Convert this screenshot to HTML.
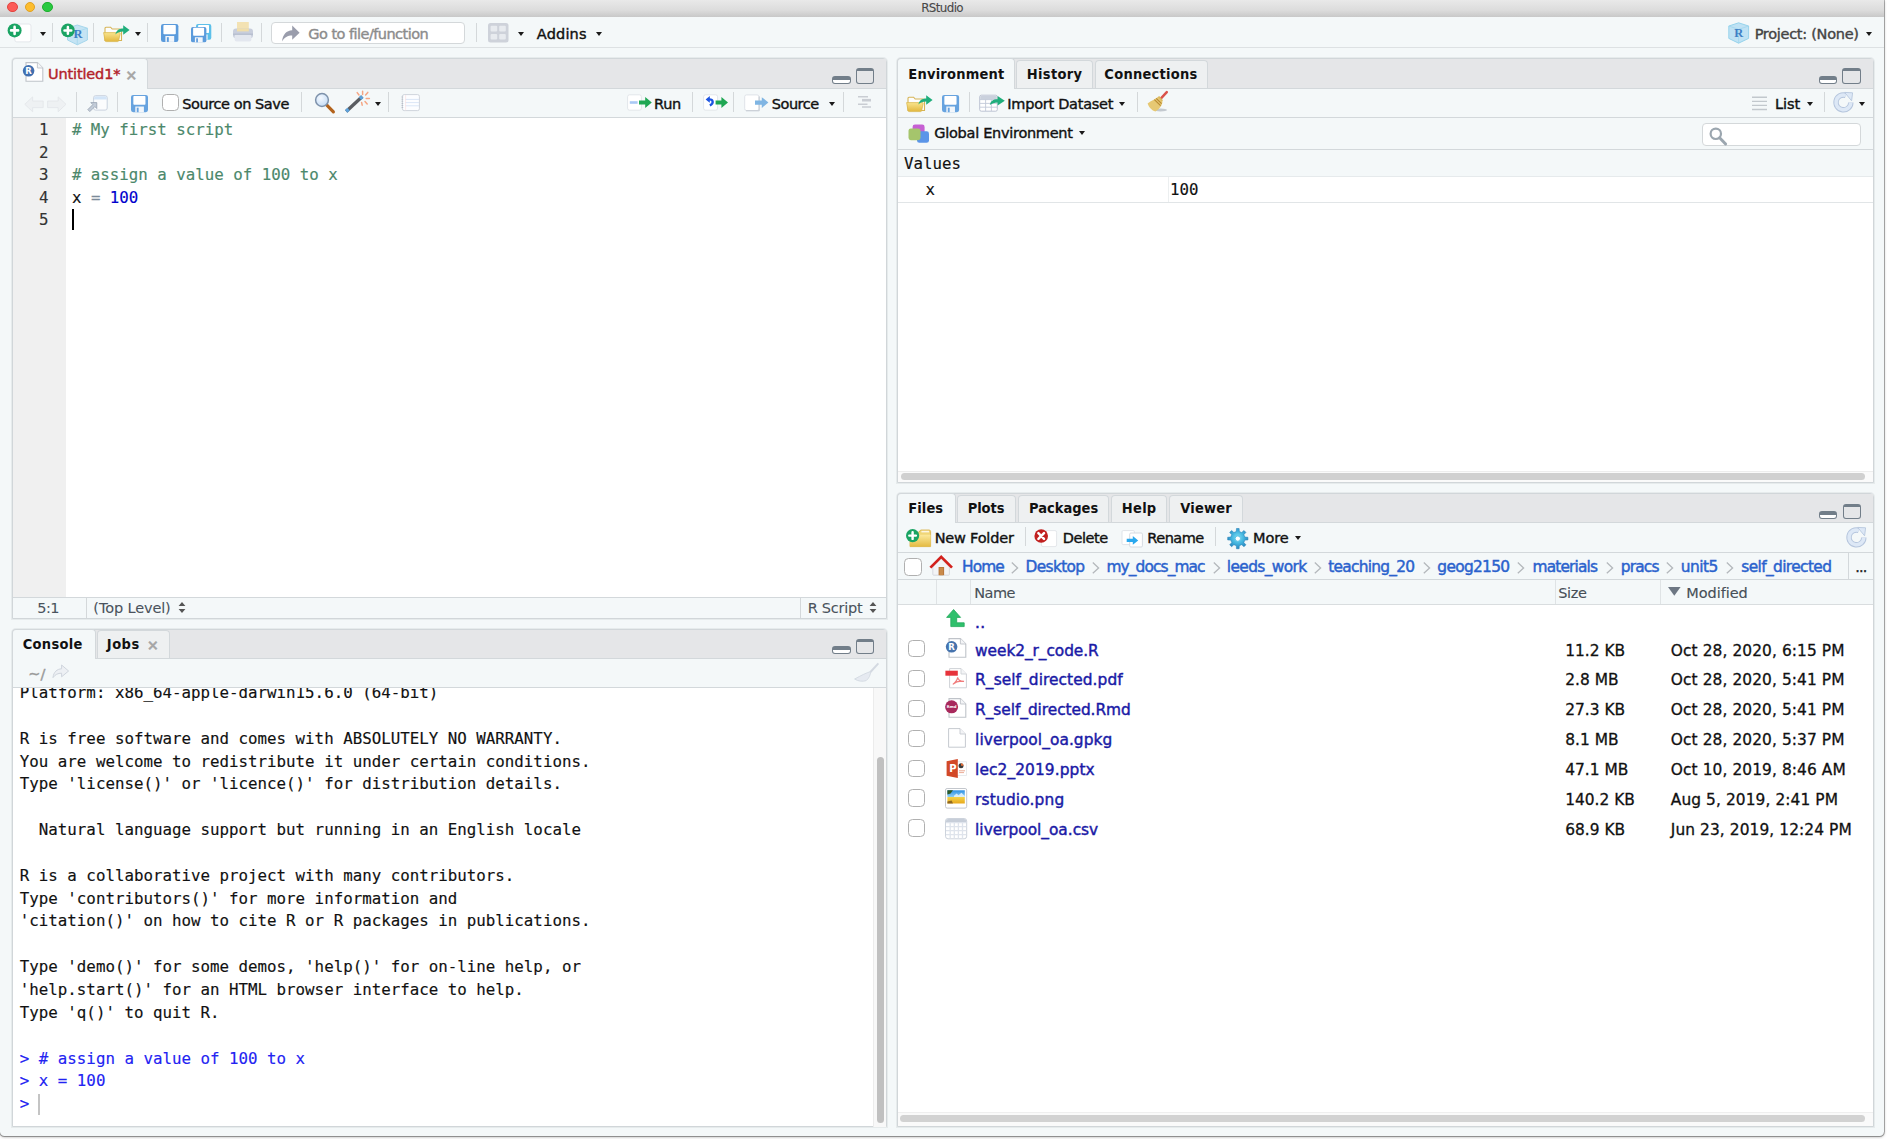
<!DOCTYPE html>
<html lang="en"><head><meta charset="utf-8"><title>RStudio</title>
<style>
html,body{margin:0;padding:0;background:#fff;width:1887px;height:1139px;overflow:hidden}
#win{position:absolute;left:0;top:0;width:1884px;height:1135.5px;background:#f4f8f9;overflow:hidden;border-radius:0 0 4.5px 4.5px;box-shadow:0 0 0 1px rgba(0,0,0,.28),0 1px 3px rgba(0,0,0,.35)}
#win div,#win svg{position:absolute;box-sizing:border-box}
#win svg{overflow:visible}
.t{-webkit-text-stroke:.4px currentColor;font-family:"DejaVu Sans","Liberation Sans",sans-serif;color:#111;white-space:nowrap;letter-spacing:-.42px}
.tb{font-family:"DejaVu Sans Condensed","DejaVu Sans","Liberation Sans",sans-serif;font-weight:bold;color:#111;white-space:nowrap;letter-spacing:-.05px}
.m{-webkit-text-stroke:.15px currentColor;font-family:"DejaVu Sans Mono","Liberation Mono",monospace;color:#111;white-space:pre}
.f{-webkit-text-stroke:.3px currentColor;font-family:"DejaVu Sans","Liberation Sans",sans-serif;color:#111;white-space:nowrap}
.dd{width:0;height:0;border-left:3.5px solid transparent;border-right:3.5px solid transparent;border-top:4.5px solid #1a1a1a}
.pane{background:#fff;border:1px solid #d1d6d9;box-shadow:0 0 0 1px rgba(209,214,217,.4);border-radius:4px 4px 0 0;overflow:hidden}
.tabbar{background:#e5e6e8;border-bottom:1px solid #d3d8db}
.bar{background:#f4f8f9;border-bottom:1px solid #d3d8db}
.tab{background:#eef0f1;border:1px solid #d3d8db;border-bottom:none;border-radius:4px 4px 0 0}
.tab.on{background:#f4f8f9}
.cb{background:#fff;border:1.9px solid #b0b0b0;border-radius:4.5px}

</style></head>
<body>
<div id="win">
<div style="left:0px;top:0px;width:1884px;height:16.5px;background:linear-gradient(#e9e9e9 0%,#dcdcdc 60%,#c8c8c8 100%)"></div>
<div style="left:7.1px;top:1.6px;width:10.8px;height:10.8px;background:#fc5b57;border:0.6px solid #e2453f;border-radius:50%"></div>
<div style="left:24.6px;top:1.6px;width:10.8px;height:10.8px;background:#fdbd2e;border:0.6px solid #e0a123;border-radius:50%"></div>
<div style="left:42.300000000000004px;top:1.6px;width:10.8px;height:10.8px;background:#29c940;border:0.6px solid #1fae2f;border-radius:50%"></div>
<div class="t" style="left:921.16px;top:-1.72px;font-size:11.9px;line-height:20px;letter-spacing:-0.610px;color:#484848;-webkit-text-stroke:.1px #484848">RStudio</div>
<div style="left:0px;top:16.5px;width:1884px;height:31.5px;background:#f4f8f9;border-bottom:1px solid #dde1e3"></div>
<div style="left:52.0px;top:23px;width:1px;height:19px;background:#d4d8da"></div>
<div style="left:93.2px;top:23px;width:1px;height:19px;background:#d4d8da"></div>
<div style="left:146.5px;top:23px;width:1px;height:19px;background:#d4d8da"></div>
<div style="left:220.5px;top:23px;width:1px;height:19px;background:#d4d8da"></div>
<div style="left:261.2px;top:23px;width:1px;height:19px;background:#d4d8da"></div>
<div style="left:475.5px;top:23px;width:1px;height:19px;background:#d4d8da"></div>
<div class="dd" style="left:40.2px;top:32.3px"></div>
<div class="dd" style="left:134.5px;top:32.3px"></div>
<div class="dd" style="left:518.2px;top:32.3px"></div>
<div class="dd" style="left:595.5px;top:32.3px"></div>
<div class="dd" style="left:1866.2px;top:32.3px"></div>
<div style="left:271px;top:21.5px;width:193.5px;height:22.5px;background:#fff;border:1px solid #d4d8da;border-radius:4px"></div>
<div class="t" style="left:308.35px;top:24.28px;font-size:14.5px;line-height:20px;letter-spacing:-0.542px;color:#8c8c8c">Go to file/function</div>
<div class="t" style="left:536.85px;top:24.28px;font-size:14.5px;line-height:20px;letter-spacing:0.158px;">Addins</div>
<div class="t" style="left:1754.65px;top:24.28px;font-size:14.5px;line-height:20px;letter-spacing:-0.283px;color:#444">Project: (None)</div>
<div class="pane" style="left:12px;top:58px;width:875px;height:561px;"></div>
<div class="tabbar" style="left:13px;top:59px;width:873px;height:30px;"></div>
<div class="tab on" style="left:12px;top:58px;width:136px;height:31px;"></div>
<div style="left:832px;top:75.89999999999999px;width:18.6px;height:8px;background:#fff;border:1.7px solid #727e89;border-top:4px solid #727e89;border-radius:3px"></div>
<div style="left:855.6px;top:68.3px;width:18.6px;height:15.6px;background:transparent;border:1.7px solid #727e89;border-top:3.8px solid #727e89;border-radius:3px"></div>
<div class="t" style="left:48.05px;top:63.88px;font-size:14.5px;line-height:20px;letter-spacing:-0.154px;color:#b3222a">Untitled1*</div>
<div class="f" style="left:125.35px;top:64.98px;font-size:14.5px;line-height:20px;letter-spacing:-1.200px;color:#a6a6a6;font-weight:bold">×</div>
<div class="bar" style="left:13px;top:89px;width:873px;height:29px;"></div>
<div style="left:75.5px;top:92px;width:1px;height:19.5px;background:#d4d8da"></div>
<div style="left:116.5px;top:92px;width:1px;height:19.5px;background:#d4d8da"></div>
<div style="left:301.2px;top:92px;width:1px;height:19.5px;background:#d4d8da"></div>
<div style="left:387.5px;top:92px;width:1px;height:19.5px;background:#d4d8da"></div>
<div style="left:692.0px;top:92px;width:1px;height:19.5px;background:#d4d8da"></div>
<div style="left:733.3px;top:92px;width:1px;height:19.5px;background:#d4d8da"></div>
<div style="left:842.5px;top:92px;width:1px;height:19.5px;background:#d4d8da"></div>
<div class="cb" style="left:161.7px;top:94px;width:17.3px;height:17.3px;"></div>
<div class="t" style="left:182.35px;top:93.88px;font-size:14.5px;line-height:20px;letter-spacing:-0.434px;">Source on Save</div>
<div class="dd" style="left:375.2px;top:101.5px"></div>
<div class="dd" style="left:829.3px;top:101.5px"></div>
<div class="t" style="left:654.05px;top:93.88px;font-size:14.5px;line-height:20px;letter-spacing:-0.303px;">Run</div>
<div class="t" style="left:771.85px;top:93.88px;font-size:14.5px;line-height:20px;letter-spacing:-0.501px;">Source</div>
<div style="left:13px;top:118px;width:53px;height:479px;background:#f0f0f0"></div>
<div class="m" style="left:0px;top:119.45px;font-size:15.75px;line-height:22px;width:48.6px;text-align:right;color:#333;">1</div>
<div class="m" style="left:71.9px;top:119.45px;font-size:15.78px;line-height:22px"><span style="color:#4c886b"># My first script</span></div>
<div class="m" style="left:0px;top:141.85px;font-size:15.75px;line-height:22px;width:48.6px;text-align:right;color:#333;">2</div>
<div class="m" style="left:0px;top:164.25px;font-size:15.75px;line-height:22px;width:48.6px;text-align:right;color:#333;">3</div>
<div class="m" style="left:71.9px;top:164.25px;font-size:15.78px;line-height:22px"><span style="color:#4c886b"># assign a value of 100 to x</span></div>
<div class="m" style="left:0px;top:186.65px;font-size:15.75px;line-height:22px;width:48.6px;text-align:right;color:#333;">4</div>
<div class="m" style="left:71.9px;top:186.65px;font-size:15.78px;line-height:22px"><span style="color:#111">x </span><span style="color:#7c8a99">= </span><span style="color:#0000cd">100</span></div>
<div class="m" style="left:0px;top:209.05px;font-size:15.75px;line-height:22px;width:48.6px;text-align:right;color:#333;">5</div>
<div style="left:71.6px;top:208.6px;width:2.4px;height:21.2px;background:#000"></div>
<div style="left:13px;top:597px;width:873px;height:21px;background:#f4f8f9;border-top:1px solid #d3d8db"></div>
<div style="left:86.2px;top:598px;width:1px;height:20px;background:#d4d8da"></div>
<div style="left:800.2px;top:598px;width:1px;height:20px;background:#d4d8da"></div>
<div class="t" style="left:37.35px;top:598.18px;font-size:14.5px;line-height:20px;letter-spacing:-0.580px;color:#4a535d;-webkit-text-stroke:.08px #4a535d">5:1</div>
<div class="t" style="left:93.35px;top:598.18px;font-size:14.5px;line-height:20px;letter-spacing:-0.124px;color:#4a535d;-webkit-text-stroke:.08px #4a535d">(Top Level)</div>
<div class="t" style="left:807.65px;top:598.18px;font-size:14.5px;line-height:20px;letter-spacing:-0.256px;color:#4a535d;-webkit-text-stroke:.08px #4a535d">R Script</div>
<svg style="left:177.5px;top:601.0px" width="8" height="13" viewBox="0 0 8 13"><path d="M0.6 5 L4 1 L7.4 5Z M0.6 8 L4 12 L7.4 8Z" fill="#555"/></svg>
<svg style="left:869px;top:601.0px" width="8" height="13" viewBox="0 0 8 13"><path d="M0.6 5 L4 1 L7.4 5Z M0.6 8 L4 12 L7.4 8Z" fill="#555"/></svg>
<div class="pane" style="left:12px;top:628.5px;width:875px;height:498.5px;"></div>
<div class="tabbar" style="left:13px;top:629.5px;width:873px;height:29.5px;"></div>
<div class="tab on" style="left:12px;top:628.5px;width:83.5px;height:30.5px;"></div>
<div class="tab" style="left:96.5px;top:630px;width:73.5px;height:28px;"></div>
<div style="left:832px;top:646.1px;width:18.6px;height:8px;background:#fff;border:1.7px solid #727e89;border-top:4px solid #727e89;border-radius:3px"></div>
<div style="left:855.6px;top:638.5px;width:18.6px;height:15.6px;background:transparent;border:1.7px solid #727e89;border-top:3.8px solid #727e89;border-radius:3px"></div>
<div class="tb" style="left:22.65px;top:633.88px;font-size:14.5px;line-height:20px;letter-spacing:0.304px;">Console</div>
<div class="tb" style="left:106.85px;top:633.88px;font-size:14.5px;line-height:20px;letter-spacing:0.471px;">Jobs</div>
<div class="f" style="left:146.85px;top:635.18px;font-size:14.5px;line-height:20px;letter-spacing:-1.200px;color:#a6a6a6;font-weight:bold">×</div>
<div class="bar" style="left:13px;top:659px;width:873px;height:29px;"></div>
<div class="t" style="left:28.35px;top:664.38px;font-size:14.5px;line-height:20px;letter-spacing:0.129px;color:#9a9a9a">~/</div>
<div style="left:13px;top:688px;width:873px;height:438px;overflow:hidden;background:#fff"><div class="m" style="left:6.8px;top:-6.05px;font-size:15.8px;line-height:22px;">Platform: x86_64-apple-darwin15.6.0 (64-bit)</div><div class="m" style="left:6.8px;top:39.65px;font-size:15.8px;line-height:22px;">R is free software and comes with ABSOLUTELY NO WARRANTY.</div><div class="m" style="left:6.8px;top:62.50px;font-size:15.8px;line-height:22px;">You are welcome to redistribute it under certain conditions.</div><div class="m" style="left:6.8px;top:85.35px;font-size:15.8px;line-height:22px;">Type &#x27;license()&#x27; or &#x27;licence()&#x27; for distribution details.</div><div class="m" style="left:6.8px;top:131.05px;font-size:15.8px;line-height:22px;">  Natural language support but running in an English locale</div><div class="m" style="left:6.8px;top:176.75px;font-size:15.8px;line-height:22px;">R is a collaborative project with many contributors.</div><div class="m" style="left:6.8px;top:199.60px;font-size:15.8px;line-height:22px;">Type &#x27;contributors()&#x27; for more information and</div><div class="m" style="left:6.8px;top:222.45px;font-size:15.8px;line-height:22px;">&#x27;citation()&#x27; on how to cite R or R packages in publications.</div><div class="m" style="left:6.8px;top:268.15px;font-size:15.8px;line-height:22px;">Type &#x27;demo()&#x27; for some demos, &#x27;help()&#x27; for on-line help, or</div><div class="m" style="left:6.8px;top:291.00px;font-size:15.8px;line-height:22px;">&#x27;help.start()&#x27; for an HTML browser interface to help.</div><div class="m" style="left:6.8px;top:313.85px;font-size:15.8px;line-height:22px;">Type &#x27;q()&#x27; to quit R.</div><div class="m" style="left:6.8px;top:359.55px;font-size:15.8px;line-height:22px;color:#2323f2;">&gt; # assign a value of 100 to x</div><div class="m" style="left:6.8px;top:382.40px;font-size:15.8px;line-height:22px;color:#2323f2;">&gt; x = 100</div><div class="m" style="left:6.8px;top:405.25px;font-size:15.8px;line-height:22px;color:#2323f2;">&gt; </div><div style="left:25.4px;top:405.5px;width:1.6px;height:21px;background:#c4c4c4"></div></div>
<div style="left:873px;top:688px;width:13px;height:438.5px;background:#f8f8f8;border-left:1px solid #ececec"></div>
<div style="left:876.8px;top:756.8px;width:7px;height:366px;background:#c0c0c0;border-radius:3.5px"></div>
<div class="pane" style="left:897px;top:58px;width:977px;height:425px;"></div>
<div class="tabbar" style="left:898px;top:59px;width:975px;height:30px;"></div>
<div class="tab on" style="left:897px;top:58px;width:117.5px;height:31px;"></div>
<div class="tab" style="left:1016px;top:59.5px;width:77px;height:28.5px;"></div>
<div class="tab" style="left:1094.7px;top:59.5px;width:113.79999999999995px;height:28.5px;"></div>
<div style="left:1818.7px;top:75.89999999999999px;width:18.6px;height:8px;background:#fff;border:1.7px solid #727e89;border-top:4px solid #727e89;border-radius:3px"></div>
<div style="left:1842.3px;top:68.3px;width:18.6px;height:15.6px;background:transparent;border:1.7px solid #727e89;border-top:3.8px solid #727e89;border-radius:3px"></div>
<div class="tb" style="left:908.35px;top:63.88px;font-size:14.5px;line-height:20px;letter-spacing:0.206px;">Environment</div>
<div class="tb" style="left:1026.85px;top:63.88px;font-size:14.5px;line-height:20px;letter-spacing:0.315px;">History</div>
<div class="tb" style="left:1104.35px;top:63.88px;font-size:14.5px;line-height:20px;letter-spacing:0.262px;">Connections</div>
<div class="bar" style="left:898px;top:89px;width:975px;height:29px;"></div>
<div style="left:969.2px;top:92px;width:1px;height:19.5px;background:#d4d8da"></div>
<div style="left:1136.5px;top:92px;width:1px;height:19.5px;background:#d4d8da"></div>
<div style="left:1824.0px;top:92px;width:1px;height:19.5px;background:#d4d8da"></div>
<div class="t" style="left:1007.35px;top:93.88px;font-size:14.5px;line-height:20px;letter-spacing:-0.265px;">Import Dataset</div>
<div class="dd" style="left:1119.3px;top:101.5px"></div>
<div class="dd" style="left:1806.5px;top:101.5px"></div>
<div class="dd" style="left:1859.3px;top:101.5px"></div>
<div class="t" style="left:1775.05px;top:93.88px;font-size:14.5px;line-height:20px;letter-spacing:-0.064px;">List</div>
<div class="bar" style="left:898px;top:118px;width:975px;height:31.5px;"></div>
<div class="t" style="left:934.35px;top:123.08px;font-size:14.5px;line-height:20px;letter-spacing:-0.286px;">Global Environment</div>
<div class="dd" style="left:1079.0px;top:131px"></div>
<div style="left:1701.5px;top:123.3px;width:159.5px;height:23px;background:#fff;border:1px solid #d4d8da;border-radius:4px"></div>
<div style="left:898px;top:149.5px;width:975px;height:27.5px;background:#f4f8f9;border-bottom:1px solid #e6eaec"></div>
<div class="m" style="left:904px;top:152.55px;font-size:15.75px;line-height:22px;">Values</div>
<div style="left:898px;top:177px;width:975px;height:26px;background:#fff;border-bottom:1px solid #e1e5e7"></div>
<div style="left:1168px;top:177px;width:1px;height:25px;background:#eceff0"></div>
<div class="m" style="left:925.6px;top:178.55px;font-size:15.75px;line-height:22px;">x</div>
<div class="m" style="left:1170px;top:178.55px;font-size:15.75px;line-height:22px;">100</div>
<div style="left:898px;top:470.5px;width:975px;height:11.5px;background:#fafafa;border-top:1px solid #ededed"></div>
<div style="left:900.8px;top:472.7px;width:964.7px;height:7.5px;background:#d0d0d0;border-radius:4px"></div>
<div class="pane" style="left:897px;top:493px;width:977px;height:634px;"></div>
<div class="tabbar" style="left:898px;top:494px;width:975px;height:29px;"></div>
<div class="tab on" style="left:897px;top:493px;width:58.5px;height:30px;"></div>
<div class="tab" style="left:957px;top:494.5px;width:59.299999999999955px;height:27.5px;"></div>
<div class="tab" style="left:1018px;top:494.5px;width:91.29999999999995px;height:27.5px;"></div>
<div class="tab" style="left:1111px;top:494.5px;width:56.299999999999955px;height:27.5px;"></div>
<div class="tab" style="left:1169px;top:494.5px;width:73.70000000000005px;height:27.5px;"></div>
<div style="left:1818.9px;top:511.1px;width:18.6px;height:8px;background:#fff;border:1.7px solid #727e89;border-top:4px solid #727e89;border-radius:3px"></div>
<div style="left:1842.5px;top:503.5px;width:18.6px;height:15.6px;background:transparent;border:1.7px solid #727e89;border-top:3.8px solid #727e89;border-radius:3px"></div>
<div class="tb" style="left:908.35px;top:497.58px;font-size:14.5px;line-height:20px;letter-spacing:0.067px;">Files</div>
<div class="tb" style="left:967.65px;top:497.58px;font-size:14.5px;line-height:20px;letter-spacing:-0.039px;">Plots</div>
<div class="tb" style="left:1029.05px;top:497.58px;font-size:14.5px;line-height:20px;letter-spacing:-0.004px;">Packages</div>
<div class="tb" style="left:1121.85px;top:497.58px;font-size:14.5px;line-height:20px;letter-spacing:0.257px;">Help</div>
<div class="tb" style="left:1180.15px;top:497.58px;font-size:14.5px;line-height:20px;letter-spacing:0.217px;">Viewer</div>
<div class="bar" style="left:898px;top:523px;width:975px;height:30px;"></div>
<div style="left:1024.5px;top:526.5px;width:1px;height:19.5px;background:#d4d8da"></div>
<div style="left:1214.8px;top:526.5px;width:1px;height:19.5px;background:#d4d8da"></div>
<div class="t" style="left:934.65px;top:528.38px;font-size:14.5px;line-height:20px;letter-spacing:-0.204px;">New Folder</div>
<div class="t" style="left:1062.65px;top:528.38px;font-size:14.5px;line-height:20px;letter-spacing:-0.409px;">Delete</div>
<div class="t" style="left:1147.35px;top:528.38px;font-size:14.5px;line-height:20px;letter-spacing:-0.527px;">Rename</div>
<div class="t" style="left:1253.05px;top:528.38px;font-size:14.5px;line-height:20px;letter-spacing:-0.087px;">More</div>
<div class="dd" style="left:1295.3px;top:536.3px"></div>
<div class="bar" style="left:898px;top:553px;width:975px;height:26.7px;"></div>
<div class="cb" style="left:904.2px;top:558.3px;width:17.4px;height:17.3px;"></div>
<div class="f" style="left:962.11px;top:557.17px;font-size:15.4px;line-height:20px;letter-spacing:-0.967px;color:#2a62cd;-webkit-text-stroke:.45px #2a62cd">Home</div>
<div class="f" style="left:1025.61px;top:557.17px;font-size:15.4px;line-height:20px;letter-spacing:-0.657px;color:#2a62cd;-webkit-text-stroke:.45px #2a62cd">Desktop</div>
<div class="f" style="left:1106.51px;top:557.17px;font-size:15.4px;line-height:20px;letter-spacing:-0.896px;color:#2a62cd;-webkit-text-stroke:.45px #2a62cd">my_docs_mac</div>
<div class="f" style="left:1226.81px;top:557.17px;font-size:15.4px;line-height:20px;letter-spacing:-0.627px;color:#2a62cd;-webkit-text-stroke:.45px #2a62cd">leeds_work</div>
<div class="f" style="left:1328.31px;top:557.17px;font-size:15.4px;line-height:20px;letter-spacing:-0.741px;color:#2a62cd;-webkit-text-stroke:.45px #2a62cd">teaching_20</div>
<div class="f" style="left:1437.31px;top:557.17px;font-size:15.4px;line-height:20px;letter-spacing:-0.688px;color:#2a62cd;-webkit-text-stroke:.45px #2a62cd">geog2150</div>
<div class="f" style="left:1532.51px;top:557.17px;font-size:15.4px;line-height:20px;letter-spacing:-0.853px;color:#2a62cd;-webkit-text-stroke:.45px #2a62cd">materials</div>
<div class="f" style="left:1620.71px;top:557.17px;font-size:15.4px;line-height:20px;letter-spacing:-0.806px;color:#2a62cd;-webkit-text-stroke:.45px #2a62cd">pracs</div>
<div class="f" style="left:1680.81px;top:557.17px;font-size:15.4px;line-height:20px;letter-spacing:-0.548px;color:#2a62cd;-webkit-text-stroke:.45px #2a62cd">unit5</div>
<div class="f" style="left:1741.31px;top:557.17px;font-size:15.4px;line-height:20px;letter-spacing:-0.626px;color:#2a62cd;-webkit-text-stroke:.45px #2a62cd">self_directed</div>
<svg style="left:1010.8px;top:561.7px" width="8" height="12" viewBox="0 0 8 12"><path d="M0.8 0.6 L6.6 5.9 L0.8 11.2" fill="none" stroke="#b4b8bc" stroke-width="1.3"/></svg>
<svg style="left:1092px;top:561.7px" width="8" height="12" viewBox="0 0 8 12"><path d="M0.8 0.6 L6.6 5.9 L0.8 11.2" fill="none" stroke="#b4b8bc" stroke-width="1.3"/></svg>
<svg style="left:1212.5px;top:561.7px" width="8" height="12" viewBox="0 0 8 12"><path d="M0.8 0.6 L6.6 5.9 L0.8 11.2" fill="none" stroke="#b4b8bc" stroke-width="1.3"/></svg>
<svg style="left:1313.8px;top:561.7px" width="8" height="12" viewBox="0 0 8 12"><path d="M0.8 0.6 L6.6 5.9 L0.8 11.2" fill="none" stroke="#b4b8bc" stroke-width="1.3"/></svg>
<svg style="left:1422.5px;top:561.7px" width="8" height="12" viewBox="0 0 8 12"><path d="M0.8 0.6 L6.6 5.9 L0.8 11.2" fill="none" stroke="#b4b8bc" stroke-width="1.3"/></svg>
<svg style="left:1517.4px;top:561.7px" width="8" height="12" viewBox="0 0 8 12"><path d="M0.8 0.6 L6.6 5.9 L0.8 11.2" fill="none" stroke="#b4b8bc" stroke-width="1.3"/></svg>
<svg style="left:1605.6px;top:561.7px" width="8" height="12" viewBox="0 0 8 12"><path d="M0.8 0.6 L6.6 5.9 L0.8 11.2" fill="none" stroke="#b4b8bc" stroke-width="1.3"/></svg>
<svg style="left:1666px;top:561.7px" width="8" height="12" viewBox="0 0 8 12"><path d="M0.8 0.6 L6.6 5.9 L0.8 11.2" fill="none" stroke="#b4b8bc" stroke-width="1.3"/></svg>
<svg style="left:1725.6px;top:561.7px" width="8" height="12" viewBox="0 0 8 12"><path d="M0.8 0.6 L6.6 5.9 L0.8 11.2" fill="none" stroke="#b4b8bc" stroke-width="1.3"/></svg>
<div style="left:1847.5px;top:553px;width:1px;height:26px;background:#d3d8db"></div>
<div class="f" style="left:1855.15px;top:557.28px;font-size:14.5px;line-height:20px;letter-spacing:-0.774px;color:#222">...</div>
<div style="left:898px;top:579.7px;width:975px;height:25px;background:#f4f8f9;border-bottom:1px solid #d9dddf"></div>
<div style="left:935.8px;top:580px;width:1.2px;height:24px;background:#dfe3e5"></div>
<div style="left:970.3px;top:580px;width:1.2px;height:24px;background:#dfe3e5"></div>
<div style="left:1554.5px;top:580px;width:1.2px;height:24px;background:#dfe3e5"></div>
<div style="left:1660.1px;top:580px;width:1.2px;height:24px;background:#dfe3e5"></div>
<div class="t" style="left:974.35px;top:582.78px;font-size:14.5px;line-height:20px;letter-spacing:-0.569px;color:#474f57;-webkit-text-stroke:.12px #474f57">Name</div>
<div class="t" style="left:1558.25px;top:582.78px;font-size:14.5px;line-height:20px;letter-spacing:-0.340px;color:#474f57;-webkit-text-stroke:.12px #474f57">Size</div>
<div class="t" style="left:1686.35px;top:582.78px;font-size:14.5px;line-height:20px;letter-spacing:-0.071px;color:#474f57;-webkit-text-stroke:.12px #474f57">Modified</div>
<svg style="left:1668px;top:586.7px" width="13" height="9" viewBox="0 0 13 9"><path d="M0 0H12.6L6.3 8.8Z" fill="#6d7783"/></svg>
<div class="f" style="left:975.11px;top:612.87px;font-size:15.4px;line-height:20px;letter-spacing:0.245px;color:#1a1aa6;-webkit-text-stroke:.5px #1a1aa6">..</div>
<div class="cb" style="left:908.4px;top:639.9px;width:17px;height:17.3px;"></div>
<div class="f" style="left:975.11px;top:640.57px;font-size:15.4px;line-height:20px;letter-spacing:-0.076px;color:#1a1aa6;-webkit-text-stroke:.42px #1a1aa6">week2_r_code.R</div>
<div class="f" style="left:1565.2px;top:640.57px;font-size:15.4px;line-height:20px;letter-spacing:.02px">11.2 KB</div>
<div class="f" style="left:1670.8px;top:640.57px;font-size:15.4px;line-height:20px;letter-spacing:.09px">Oct 28, 2020, 6:15 PM</div>
<div class="cb" style="left:908.4px;top:669.8px;width:17px;height:17.3px;"></div>
<div class="f" style="left:975.11px;top:670.47px;font-size:15.4px;line-height:20px;letter-spacing:0.065px;color:#1a1aa6;-webkit-text-stroke:.42px #1a1aa6">R_self_directed.pdf</div>
<div class="f" style="left:1565.2px;top:670.47px;font-size:15.4px;line-height:20px;letter-spacing:.02px">2.8 MB</div>
<div class="f" style="left:1670.8px;top:670.47px;font-size:15.4px;line-height:20px;letter-spacing:.09px">Oct 28, 2020, 5:41 PM</div>
<div class="cb" style="left:908.4px;top:699.6999999999999px;width:17px;height:17.3px;"></div>
<div class="f" style="left:975.11px;top:700.37px;font-size:15.4px;line-height:20px;letter-spacing:-0.067px;color:#1a1aa6;-webkit-text-stroke:.42px #1a1aa6">R_self_directed.Rmd</div>
<div class="f" style="left:1565.2px;top:700.37px;font-size:15.4px;line-height:20px;letter-spacing:.02px">27.3 KB</div>
<div class="f" style="left:1670.8px;top:700.37px;font-size:15.4px;line-height:20px;letter-spacing:.09px">Oct 28, 2020, 5:41 PM</div>
<div class="cb" style="left:908.4px;top:729.6px;width:17px;height:17.3px;"></div>
<div class="f" style="left:975.11px;top:730.27px;font-size:15.4px;line-height:20px;letter-spacing:0.076px;color:#1a1aa6;-webkit-text-stroke:.42px #1a1aa6">liverpool_oa.gpkg</div>
<div class="f" style="left:1565.2px;top:730.27px;font-size:15.4px;line-height:20px;letter-spacing:.02px">8.1 MB</div>
<div class="f" style="left:1670.8px;top:730.27px;font-size:15.4px;line-height:20px;letter-spacing:.09px">Oct 28, 2020, 5:37 PM</div>
<div class="cb" style="left:908.4px;top:759.5px;width:17px;height:17.3px;"></div>
<div class="f" style="left:975.11px;top:760.17px;font-size:15.4px;line-height:20px;letter-spacing:0.082px;color:#1a1aa6;-webkit-text-stroke:.42px #1a1aa6">lec2_2019.pptx</div>
<div class="f" style="left:1565.2px;top:760.17px;font-size:15.4px;line-height:20px;letter-spacing:.02px">47.1 MB</div>
<div class="f" style="left:1670.8px;top:760.17px;font-size:15.4px;line-height:20px;letter-spacing:.09px">Oct 10, 2019, 8:46 AM</div>
<div class="cb" style="left:908.4px;top:789.4px;width:17px;height:17.3px;"></div>
<div class="f" style="left:975.11px;top:790.07px;font-size:15.4px;line-height:20px;letter-spacing:0.161px;color:#1a1aa6;-webkit-text-stroke:.42px #1a1aa6">rstudio.png</div>
<div class="f" style="left:1565.2px;top:790.07px;font-size:15.4px;line-height:20px;letter-spacing:.02px">140.2 KB</div>
<div class="f" style="left:1670.8px;top:790.07px;font-size:15.4px;line-height:20px;letter-spacing:.09px">Aug 5, 2019, 2:41 PM</div>
<div class="cb" style="left:908.4px;top:819.3px;width:17px;height:17.3px;"></div>
<div class="f" style="left:975.11px;top:819.97px;font-size:15.4px;line-height:20px;letter-spacing:-0.017px;color:#1a1aa6;-webkit-text-stroke:.42px #1a1aa6">liverpool_oa.csv</div>
<div class="f" style="left:1565.2px;top:819.97px;font-size:15.4px;line-height:20px;letter-spacing:.02px">68.9 KB</div>
<div class="f" style="left:1670.8px;top:819.97px;font-size:15.4px;line-height:20px;letter-spacing:.09px">Jun 23, 2019, 12:24 PM</div>
<div style="left:898px;top:1112px;width:975px;height:14px;background:#fafafa;border-top:1px solid #efefef"></div>
<div style="left:900.3px;top:1115px;width:965px;height:7.4px;background:#d2d2d2;border-radius:4px"></div>
<svg style="left:7px;top:23px" width="26" height="20" viewBox="0 0 26 20"><rect x="7.8" y="1" width="16.2" height="17.9" rx="2" fill="#fff" stroke="#e4e7eb" stroke-width="1"/><circle cx="7.6" cy="7.4" r="7" fill="#1aa463"/><path d="M4.1 7.4H11.1M7.6 3.9000000000000004V10.9" stroke="#fff" stroke-width="2.59" stroke-linecap="round"/></svg>
<svg style="left:60px;top:23px" width="29" height="23" viewBox="0 0 29 23"><path d="M17.3 2 27.4 5.2V17L17.3 21.8 7.5 17V5.2z" fill="#c3e3f4" stroke="#9bd3ea" stroke-width=".9" opacity=".95"/><path d="M7.5 5.2 17.3 8.6 27.4 5.2M17.3 8.6V21.8" fill="none" stroke="#a5d8ee" stroke-width=".8"/><text x="13.6" y="14.9" font-family="Liberation Serif,serif" font-weight="bold" font-size="12.5" fill="#3f7fc4">R</text><circle cx="7.9" cy="7.4" r="6.8" fill="#1aa463"/><path d="M4.5 7.4H11.3M7.9 4.0V10.8" stroke="#fff" stroke-width="2.52" stroke-linecap="round"/></svg>
<svg style="left:103px;top:25.2px" width="27" height="17" viewBox="0 0 27 17"><defs><linearGradient id="fg103" x1="0" y1="0" x2="0" y2="1"><stop offset="0" stop-color="#f9e48e"/><stop offset="1" stop-color="#e2b73e"/></linearGradient></defs><path d="M2 15.5V3.2q0-1 1-1h4.6l1.6 1.8h8.3q1 0 1 1V15.5z" fill="#fdfdfd" stroke="#d6b456" stroke-width="1.1"/><path d="M0.6 7.6h15.8q1 0 .8 1l-1.5 7q-.2 1-1.2 1H3.2q-1 0-1.2-1z" fill="url(#fg103)" stroke="#d9b449" stroke-width=".7"/><path d="M12.4 9.6C13 5.4 16 3.4 20.2 3.4V0.2L26.6 5 20.2 9.8V6.6C17 6.6 14.6 7.4 12.4 9.6z" fill="#1fae7c"/></svg>
<svg style="left:160.6px;top:24px" width="17.4" height="17.9" viewBox="0 0 17.4 17.9"><g transform="scale(1.000,1.000)"><rect x="0" y="0" width="17.4" height="17.9" rx="2.2" fill="#5b9bdc"/><rect x="2.4" y="1" width="12.4" height="9.2" rx="0.8" fill="#fff"/><rect x="4.4" y="12" width="8.8" height="5.9" fill="#f2f6fb"/><rect x="5.9" y="13.2" width="1.9" height="4.7" fill="#5b9bdc"/></g></svg>
<svg style="left:196.2px;top:23.6px" width="15.3" height="15.7" viewBox="0 0 15.3 15.7"><g transform="scale(0.879,0.877)"><rect x="0" y="0" width="17.4" height="17.9" rx="2.2" fill="#5cc0ea"/><rect x="2.4" y="1" width="12.4" height="9.2" rx="0.8" fill="#fff"/><rect x="4.4" y="12" width="8.8" height="5.9" fill="#f2f6fb"/><rect x="5.9" y="13.2" width="1.9" height="4.7" fill="#5cc0ea"/></g></svg>
<svg style="left:191px;top:26.6px" width="15.4" height="15.3" viewBox="0 0 15.4 15.3"><g transform="scale(0.885,0.855)"><rect x="0" y="0" width="17.4" height="17.9" rx="2.2" fill="#5b9bdc"/><rect x="2.4" y="1" width="12.4" height="9.2" rx="0.8" fill="#fff"/><rect x="4.4" y="12" width="8.8" height="5.9" fill="#f2f6fb"/><rect x="5.9" y="13.2" width="1.9" height="4.7" fill="#5b9bdc"/></g></svg>
<svg style="left:232px;top:21px" width="22" height="21" viewBox="0 0 22 21"><rect x="5" y="1" width="11.8" height="9.6" fill="#f3e2b3"/><rect x="1" y="7.4" width="20" height="9.8" rx="3" fill="#c8cedc"/><rect x="5" y="7.4" width="11.8" height="3" fill="#f0deab"/><rect x="2.6" y="13.4" width="16.8" height="7" rx="2" fill="#e3e7ef"/><rect x="1" y="12.6" width="20" height="1.2" fill="#b4bccd"/></svg>
<svg style="left:281px;top:25px" width="19" height="17" viewBox="0 0 19 17"><path d="M1 16.4C1.8 9.6 5.4 5.4 11.2 5.2V0.6L18.6 7.8 11.2 14.8V10.4C6.6 10.4 3.6 12.2 1 16.4z" fill="#9a9dac"/></svg>
<svg style="left:487.5px;top:23px" width="21" height="20" viewBox="0 0 21 20"><rect x="0" y="0" width="20.5" height="19.5" rx="2.5" fill="#ced2da"/><rect x="2.6" y="2.8" width="6.6" height="5.6" rx="1" fill="#e8ebef"/><rect x="11.2" y="2.8" width="6.6" height="5.6" rx="1" fill="#e8ebef"/><rect x="2.6" y="11" width="6.6" height="5.6" rx="1" fill="#e8ebef"/><rect x="11.2" y="11" width="6.6" height="5.6" rx="1" fill="#e8ebef"/></svg>
<svg style="left:1728px;top:22px" width="22" height="22" viewBox="0 0 22 22"><path d="M10.6 .8 20.6 4V16.4L10.6 21.2.8 16.4V4z" fill="#bfe2f4" stroke="#8fd0ea" stroke-width=".9"/><path d="M.8 4 10.6 7.4 20.6 4M10.6 7.4V21.2" fill="none" stroke="#9fd6ee" stroke-width=".8"/><text x="6.3" y="14.6" font-family="Liberation Serif,serif" font-weight="bold" font-size="12.5" fill="#3f7fc4">R</text></svg>
<svg style="left:22.0px;top:62.2px" width="22" height="20" viewBox="0 0 22 20"><path d="M4 .6h11.4l5.4 5.4V19.2H4z" fill="#fff" stroke="#bfc3c9" stroke-width="1.1"/><path d="M15.4 .6V6h5.4" fill="#f3f4f6" stroke="#bfc3c9" stroke-width=".9"/><circle cx="6.6" cy="8.8" r="5.8" fill="#4170b0"/><text x="6.6" y="11.86" text-anchor="middle" font-family="DejaVu Sans,Liberation Sans,sans-serif" font-weight="bold" font-size="8.5" fill="#fff">R</text></svg>
<svg style="left:24px;top:96px" width="43" height="17" viewBox="0 0 43 17"><path d="M.8 8.3 8.6 .9V5h10.6v6.6H8.6v4.1z" fill="#eef1f3" stroke="#e3e7ea" stroke-width=".9"/><path d="M42 8.3 34.2.9V5H23.6v6.6h10.6v4.1z" fill="#eef1f3" stroke="#e3e7ea" stroke-width=".9"/></svg>
<svg style="left:87px;top:95px" width="21" height="17" viewBox="0 0 21 17"><rect x="6.6" y=".7" width="13.6" height="14.4" rx="2" fill="#fbfcfd" stroke="#c9d2de" stroke-width="1"/><path d="M7.1 2.7q0-1.5 1.5-1.5h9.6q1.5 0 1.5 1.5v1.8H7.1z" fill="#d3e5f8"/><path d="M.8 14.6 5.800 9.600 3.800 7.600H9.800V13.600L7.800 11.600 2.800 16.600z" fill="#c3ccd8" stroke="#8f9bab" stroke-width=".7"/></svg>
<svg style="left:131px;top:95.3px" width="17" height="17.2" viewBox="0 0 17 17.2"><g transform="scale(0.977,0.961)"><rect x="0" y="0" width="17.4" height="17.9" rx="2.2" fill="#67a3df"/><rect x="2.4" y="1" width="12.4" height="9.2" rx="0.8" fill="#fff"/><rect x="4.4" y="12" width="8.8" height="5.9" fill="#f2f6fb"/><rect x="5.9" y="13.2" width="1.9" height="4.7" fill="#67a3df"/></g></svg>
<svg style="left:314px;top:92px" width="21" height="21" viewBox="0 0 21 21"><defs><radialGradient id="lens" cx=".4" cy=".35" r=".7"><stop offset="0" stop-color="#f4f9ff"/><stop offset="1" stop-color="#c3dbf5"/></radialGradient></defs><path d="M12.6 12.8 19.4 19.8" stroke="#b3631c" stroke-width="3.2" stroke-linecap="round"/><circle cx="8" cy="8" r="6.4" fill="url(#lens)" stroke="#7e92ab" stroke-width="1.5"/></svg>
<svg style="left:344px;top:90px" width="26" height="23" viewBox="0 0 26 23"><path d="M2.2 21.4 18.3 6.6" stroke="#5a5d62" stroke-width="3.4" stroke-linecap="butt"/><path d="M2.2 21.4 4.6 19.2M16 8.7 18.3 6.6" stroke="#5da2dc" stroke-width="3.6"/><path d="M18.6 1.2V4.4M13.2 2.6 15 5M23.8 2.4 21.6 5M25.4 8.4H22.2M23.2 14 21 11.6M18.2 15.2 17.6 12.4" stroke="#f5a583" stroke-width="1.5" stroke-linecap="round"/></svg>
<svg style="left:401px;top:94px" width="20" height="18" viewBox="0 0 20 18"><rect x="1.4" y=".6" width="17" height="16" rx="1.8" fill="#fcfdff" stroke="#cfd4dc" stroke-width="1"/><path d="M1.4 2.6v12.4" stroke="#b9bec8" stroke-width="1.6" stroke-dasharray="1 1.1"/><path d="M4 5.4H18M4 8.6H18M4 11.8H18" stroke="#dbe6f7" stroke-width="1"/><path d="M4.6 1V16.4" stroke="#fae3e3" stroke-width=".8"/></svg>
<svg style="left:627px;top:94px" width="26" height="18" viewBox="0 0 26 18"><rect x=".6" y=".8" width="13.8" height="15.4" rx="2" fill="#fff" stroke="#e2e6ea" stroke-width="1"/><path d="M2.8 8.5H10.6" stroke="#a9c9f5" stroke-width="2.6"/><path d="M12 6.4H18.200000000000003V3.0999999999999996L24.8 8.5L18.200000000000003 13.9V10.6H12z" fill="#1fa753"/></svg>
<svg style="left:703px;top:94px" width="26" height="18" viewBox="0 0 26 18"><rect x=".6" y=".8" width="14" height="15.4" rx="2" fill="#fff" stroke="#e2e6ea" stroke-width="1"/><path d="M6.8 11.4C11 9.6 10.6 5.2 5.8 5.4" fill="none" stroke="#1d55e2" stroke-width="2.3"/><path d="M2.6 5.4 6.8 2V8.8z" fill="#1d55e2"/><path d="M12.6 6.4H18.4V3.0999999999999996L25 8.5L18.4 13.9V10.6H12.6z" fill="#1fa753"/></svg>
<svg style="left:744px;top:94px" width="25" height="18" viewBox="0 0 25 18"><rect x=".7" y=".9" width="14.2" height="15.6" rx="1.8" fill="#fff" stroke="#dfe3e8" stroke-width="1"/><path d="M15.2 2.4V16.8H2" fill="none" stroke="#c3c9d2" stroke-width="1"/><path d="M11 6.5H17.799999999999997V3.1999999999999993L24.4 8.6L17.799999999999997 14.0V10.7H11z" fill="#7fb5e3"/></svg>
<svg style="left:857px;top:95px" width="16" height="14" viewBox="0 0 16 14"><path d="M1 1.7H11M5 5.2H14M1 9.3H10.5M5 12H14" stroke="#c9cdd3" stroke-width="1.5"/><path d="M5 5.2H14" stroke="#c9cdd3" stroke-width="2.6"/></svg>
<svg style="left:52px;top:664px" width="18" height="15" viewBox="0 0 18 15"><path d="M1 13.6C1.6 8 5 5 9.6 4.8V1L16.6 7 9.6 12.8V9.2C6 9.2 3.2 10.4 1 13.6z" fill="#edf0f4" stroke="#cfd5dd" stroke-width="1"/></svg>
<svg style="left:853px;top:662px" width="27" height="20" viewBox="0 0 27 20"><path d="M25.4 1.4 17.2 10.2" stroke="#d3d9e1" stroke-width="2"/><path d="M17.8 9.6C14 10.4 8 13.6 1.6 17 5 19.4 10 19.8 13.2 18.6 16 16.4 17.4 13 17.8 9.600z" fill="#e6eaf1" stroke="#d3d9e1" stroke-width=".9"/></svg>
<svg style="left:905.5px;top:95px" width="27" height="17" viewBox="0 0 27 17"><defs><linearGradient id="fg905" x1="0" y1="0" x2="0" y2="1"><stop offset="0" stop-color="#f9e48e"/><stop offset="1" stop-color="#e2b73e"/></linearGradient></defs><path d="M2 15.5V3.2q0-1 1-1h4.6l1.6 1.8h8.3q1 0 1 1V15.5z" fill="#fdfdfd" stroke="#d6b456" stroke-width="1.1"/><path d="M0.6 7.6h15.8q1 0 .8 1l-1.5 7q-.2 1-1.2 1H3.2q-1 0-1.2-1z" fill="url(#fg905)" stroke="#d9b449" stroke-width=".7"/><path d="M12.4 9.6C13 5.4 16 3.4 20.2 3.4V0.2L26.6 5 20.2 9.8V6.6C17 6.6 14.6 7.4 12.4 9.6z" fill="#1fae7c"/></svg>
<svg style="left:941.8px;top:95.3px" width="17.1" height="17.2" viewBox="0 0 17.1 17.2"><g transform="scale(0.983,0.961)"><rect x="0" y="0" width="17.4" height="17.9" rx="2.2" fill="#67a3df"/><rect x="2.4" y="1" width="12.4" height="9.2" rx="0.8" fill="#fff"/><rect x="4.4" y="12" width="8.8" height="5.9" fill="#f2f6fb"/><rect x="5.9" y="13.2" width="1.9" height="4.7" fill="#67a3df"/></g></svg>
<svg style="left:979.3px;top:94.3px" width="27" height="19" viewBox="0 0 27 19"><rect x=".7" y="1.2" width="17.6" height="16" rx="1.6" fill="#fff" stroke="#bcc3d2" stroke-width="1"/><path d="M1.2 2.800q0-1.100 1.100-1.100h14.400q1.100 0 1.100 1.100V5.400H1.200z" fill="#cad1dd"/><path d="M1 5.600H18M1 9.400H18M1 13.200H18M6.600 5.600V17M12.400 5.600V17" stroke="#c2c8d8" stroke-width=".9"/><path d="M10.800 11C11.400 7 14.200 5.200 18.600 5.200V2L25.800 6.800 18.600 11.600V8.400C15.400 8.400 13 9.200 10.800 11z" fill="#1fae7c"/></svg>
<svg style="left:1147px;top:91.4px" width="22" height="22" viewBox="0 0 22 22"><ellipse cx="13.6" cy="19" rx="6.4" ry="1.5" fill="#9aa3ad" opacity=".55"/><path d="M19.8 1.2 14.2 7.2" stroke="#da534b" stroke-width="2.5" stroke-linecap="round"/><path d="M11.6 5.6 15.4 9.8C15.8 13 13.6 17.6 8.4 20.4 5 19.6 1.8 16 .6 12.400 4.200 10 8.400 8 11.600 5.600z" fill="#e6c873"/><path d="M9.2 7.400 14.600 12.600M7.400 8.600 13.600 14.600" stroke="#b98a31" stroke-width="1.2"/><path d="M11.6 5.6 15.4 9.8" stroke="#d9b85e" stroke-width="1.6"/></svg>
<svg style="left:1752px;top:96px" width="16" height="15" viewBox="0 0 16 15"><path d="M0 1.300H15M0 5.400H15M0 9.400H15M0 13.500H15" stroke="#c2c8cd" stroke-width="1.4"/></svg>
<svg style="left:1833.4px;top:92.2px" width="21" height="21" viewBox="0 0 21 21"><path d="M17.800 10.400A7.400 7.400 0 1 1 12.800 3.400" fill="none" stroke="#b5c5dd" stroke-width="5.400"/><path d="M17.800 10.400A7.400 7.400 0 1 1 12.800 3.400" fill="none" stroke="#dde8f6" stroke-width="3.600"/><path d="M11.600 .4 19.600 .8 18.600 8.800z" fill="#dde8f6" stroke="#b7c7de" stroke-width=".9"/></svg>
<svg style="left:908px;top:123.5px" width="22" height="20" viewBox="0 0 22 20"><rect x="4.600" y=".5" width="12" height="11" rx="2.400" fill="#c660d3"/><rect x="9" y="7.300" width="12" height="11.500" rx="2.400" fill="#5b95e8"/><rect x=".5" y="4.400" width="12" height="11.800" rx="2.400" fill="#a5c56c"/></svg>
<svg style="left:1709px;top:126.5px" width="19" height="19" viewBox="0 0 19 19"><circle cx="6.800" cy="6.800" r="5.200" fill="none" stroke="#9ba6af" stroke-width="2.200"/><path d="M10.600 10.800 16.600 17" stroke="#9ba6af" stroke-width="3" stroke-linecap="round"/></svg>
<svg style="left:905px;top:528px" width="27" height="20" viewBox="0 0 27 20"><defs><linearGradient id="nf" x1="0" y1="0" x2="0" y2="1"><stop offset="0" stop-color="#fbe99c"/><stop offset="1" stop-color="#e4ba42"/></linearGradient></defs><path d="M5 18.600V5.200q0-1 1-1h8l1.600-2.200h8.400q1.600 0 1.600 1.600V18.600z" fill="#f0d678" stroke="#d9b650" stroke-width=".9"/><path d="M16.400 3.600h7.600" stroke="#fff" stroke-width="1.600" opacity=".8"/><path d="M5 6.800H25.600V17.600q0 1-1 1H6q-1 0-1-1z" fill="url(#nf)"/><circle cx="7.6" cy="7.6" r="6.6" fill="#1aa463"/><path d="M4.3 7.6H10.899999999999999M7.6 4.3V10.899999999999999" stroke="#fff" stroke-width="2.44" stroke-linecap="round"/></svg>
<svg style="left:1033px;top:528px" width="25" height="20" viewBox="0 0 25 20"><rect x="8.400" y="2.600" width="15.200" height="16" rx="1.600" fill="#fff" stroke="#e4e7eb" stroke-width="1"/><circle cx="8.200" cy="8" r="6.800" fill="#c1201f"/><path d="M5.400 5.200 11 10.800M11 5.200 5.400 10.800" stroke="#fff" stroke-width="2.500" stroke-linecap="round"/></svg>
<svg style="left:1121px;top:530px" width="23" height="19" viewBox="0 0 23 19"><rect x="1" y=".6" width="12.400" height="14" rx="1.200" fill="#fff" stroke="#dfe3e8" stroke-width="1"/><rect x="8.700" y="3" width="12.700" height="14" rx="1.200" fill="#fff" stroke="#d5dae1" stroke-width="1"/><path d="M5.7 8.700000000000001H11.799999999999999V6.1000000000000005L17.2 10.4L11.799999999999999 14.7V12.1H5.7z" fill="#2aa8ee"/></svg>
<svg style="left:1227px;top:527.5px" width="22" height="22" viewBox="0 0 22 22"><defs><radialGradient id="gg" cx=".5" cy=".45" r=".55"><stop offset="0" stop-color="#7fe0f5"/><stop offset=".55" stop-color="#43b4de"/><stop offset="1" stop-color="#2a86bd"/></radialGradient></defs><path d="M17.84 9.10L20.91 9.28L20.91 11.92L17.84 12.10L16.84 14.52L18.89 16.82L17.02 18.69L14.72 16.64L12.30 17.64L12.12 20.71L9.48 20.71L9.30 17.64L6.88 16.64L4.58 18.69L2.71 16.82L4.76 14.52L3.76 12.10L0.69 11.92L0.69 9.28L3.76 9.10L4.76 6.68L2.71 4.38L4.58 2.51L6.88 4.56L9.30 3.56L9.48 0.49L12.12 0.49L12.30 3.56L14.72 4.56L17.02 2.51L18.89 4.38L16.84 6.68z" fill="url(#gg)" stroke="#2a86bd" stroke-width=".6" stroke-linejoin="round"/><circle cx="10.800" cy="10.600" r="2.700" fill="#fff" stroke="#5cc3e6" stroke-width="1"/></svg>
<svg style="left:1846px;top:526.8px" width="21" height="21" viewBox="0 0 21 21"><path d="M17.800 10.400A7.400 7.400 0 1 1 12.800 3.400" fill="none" stroke="#b5c5dd" stroke-width="5.400"/><path d="M17.800 10.400A7.400 7.400 0 1 1 12.800 3.400" fill="none" stroke="#dde8f6" stroke-width="3.600"/><path d="M11.600 .4 19.600 .8 18.600 8.800z" fill="#dde8f6" stroke="#b7c7de" stroke-width=".9"/></svg>
<svg style="left:929px;top:555px" width="24" height="21" viewBox="0 0 24 21"><path d="M3.800 12V19.400q0 .8.800.8H19.600q.8 0 .8-.8V12L12.200 3.600z" fill="#f3f4f6" stroke="#cfd3d9" stroke-width=".8"/><rect x="9.600" y="12" width="5.500" height="8.200" fill="#b7773b"/><rect x="10.600" y="13" width="3.500" height="7.200" fill="#c98a4b"/><path d="M1.400 12.600 12.200 1.800 23 12.600" fill="none" stroke="#d3211c" stroke-width="2.700" stroke-linejoin="miter"/></svg>
<svg style="left:946px;top:609px" width="19" height="18" viewBox="0 0 19 18"><path d="M7.600 .5 14.600 8.400H10.700V13.800H18.200V17.600H4.800V8.400H.6z" fill="#2fc06c" stroke="#22a85a" stroke-width=".8" stroke-linejoin="round"/></svg>
<svg style="left:944.7px;top:637.9px" width="22" height="20" viewBox="0 0 22 20"><path d="M4 .6h11.4l5.4 5.4V19.2H4z" fill="#fff" stroke="#bfc3c9" stroke-width="1.1"/><path d="M15.4 .6V6h5.4" fill="#f3f4f6" stroke="#bfc3c9" stroke-width=".9"/><circle cx="6.6" cy="8.8" r="5.8" fill="#4673ad"/><text x="6.6" y="11.86" text-anchor="middle" font-family="DejaVu Sans,Liberation Sans,sans-serif" font-weight="bold" font-size="8.5" fill="#fff">R</text></svg>
<svg style="left:945px;top:668.0999999999999px" width="23" height="21" viewBox="0 0 23 21"><path d="M4.600 .6h11.400l5.400 5.400V19.800H4.600z" fill="#fff" stroke="#cfd2d7" stroke-width="1"/><path d="M16 .6V6h5.400" fill="#f3f4f6" stroke="#cfd2d7" stroke-width=".9"/><rect x=".4" y="2.700" width="12.400" height="5" fill="#e7333b"/><path d="M7.800 16.400C11 14 12.400 11.400 12.600 9.400 13.400 12 15.600 13.600 19 13.400 15.400 12.600 10.800 13.800 7.800 16.400z" fill="none" stroke="#f07c7c" stroke-width="1.100"/></svg>
<svg style="left:944.7px;top:697.6999999999999px" width="22" height="20" viewBox="0 0 22 20"><path d="M4 .6h11.4l5.4 5.4V19.2H4z" fill="#fff" stroke="#bfc3c9" stroke-width="1.1"/><path d="M15.4 .6V6h5.4" fill="#f3f4f6" stroke="#bfc3c9" stroke-width=".9"/><circle cx="6.6" cy="8.8" r="6.5" fill="#a8295c"/><text x="6.6" y="10.17" text-anchor="middle" font-family="DejaVu Sans,Liberation Sans,sans-serif" font-weight="bold" font-size="3.8" fill="#fff">Rmd</text></svg>
<svg style="left:947.6px;top:727.9px" width="19" height="20" viewBox="0 0 19 20"><path d="M.6 .6h11.400l5.400 5.400V19.200H.6z" fill="#fff" stroke="#c6cad0" stroke-width="1"/><path d="M12 .6V6h5.400" fill="#f3f4f6" stroke="#c6cad0" stroke-width=".9"/></svg>
<svg style="left:946px;top:758.5px" width="22" height="20" viewBox="0 0 22 20"><rect x="9" y="2.800" width="11.400" height="13.600" fill="#fff" stroke="#e3e5e9" stroke-width=".8"/><circle cx="15" cy="6.800" r="2.500" fill="#3b3b3b"/><path d="M15 6.800V4.300A2.500 2.500 0 0 1 17.500 6.800z" fill="#e8703a"/><path d="M13 11.800H19M13 13.600H18" stroke="#e9a38b" stroke-width=".9"/><path d="M.6 2.200 11.800 0V19L.6 16.800z" fill="#d24827"/><text x="3.200" y="13.400" font-family="DejaVu Sans,Liberation Sans,sans-serif" font-weight="bold" font-size="10" fill="#fff">P</text></svg>
<svg style="left:945px;top:787.5999999999999px" width="23" height="21" viewBox="0 0 23 21"><defs><linearGradient id="sky" x1="0" y1="0" x2="0" y2="1"><stop offset="0" stop-color="#2c8fe3"/><stop offset=".5" stop-color="#8fd0f5"/><stop offset=".52" stop-color="#f2d24a"/><stop offset="1" stop-color="#e9a91b"/></linearGradient></defs><rect x=".5" y=".5" width="21.200" height="19.600" rx="1.600" fill="#fff" stroke="#c3c7cd" stroke-width="1"/><rect x="2.400" y="2.300" width="17.400" height="13.200" fill="url(#sky)"/><path d="M2.400 2.300H8L5.600 5.600 2.400 6.400z" fill="#2d5a27"/><path d="M2.400 13.400 6.600 12.600 8 15.500H2.400z" fill="#6a4a1c" opacity=".7"/><path d="M9 7.800 11.600 5.400 13.600 7.200 16.400 4.800 19.800 8V9H9z" fill="#e9f4fc" opacity=".85"/></svg>
<svg style="left:945px;top:817.4999999999999px" width="23" height="22" viewBox="0 0 23 22"><rect x=".5" y=".5" width="21.200" height="20.300" rx="2.600" fill="#fff" stroke="#cdd3dc" stroke-width="1"/><path d="M1 3.100q0-2.100 2.100-2.100h16q2.100 0 2.100 2.100V4.200H1z" fill="#c7ced9"/><path d="M1 4.600H21.200M1 8.600H21.200M1 12.600H21.200M1 16.600H21.200M5.200 4.600V20.600M9.300 4.600V20.600M13.400 4.600V20.600M17.500 4.600V20.600" stroke="#dfe4ec" stroke-width="1.300"/></svg>
</div>
</body></html>
